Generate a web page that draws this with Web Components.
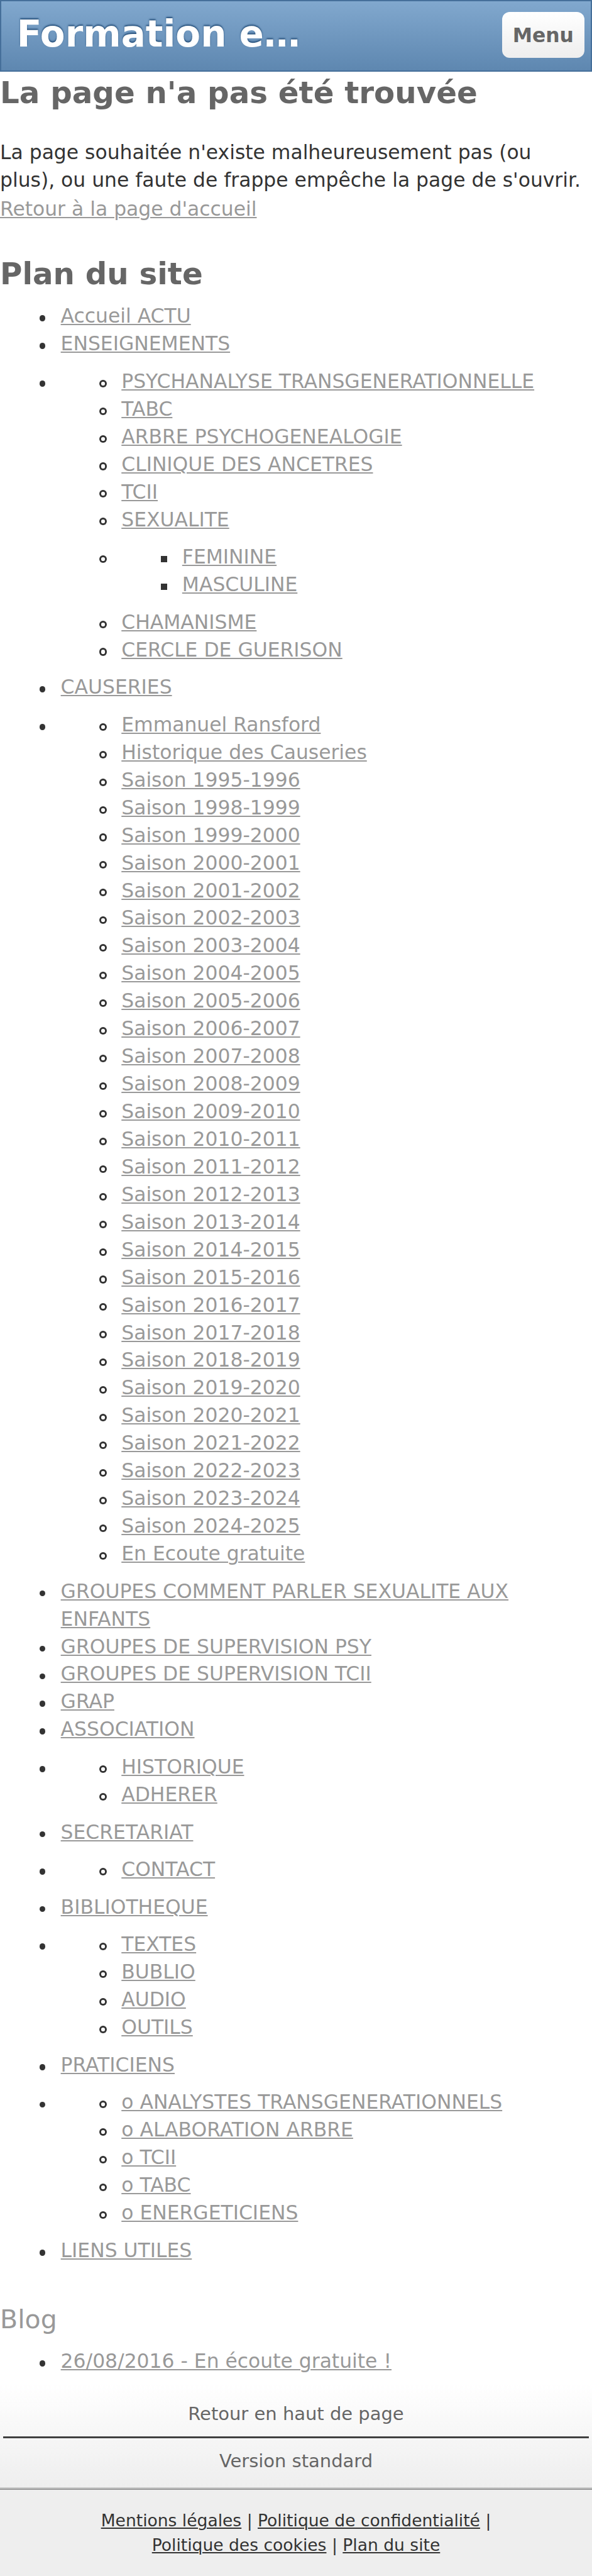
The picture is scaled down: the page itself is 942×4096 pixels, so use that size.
<!DOCTYPE html>
<html lang="fr">
<head>
<meta charset="utf-8">
<title>Plan du site</title>
<style>
    /* 1rem = 10px of a 390px wide mobile screen */
    html {
        font-size: calc(100vw / 39);
    }

    body {
        margin: 0;
        background: #fff;
        color: #333;
        font-family: "DejaVu Sans", Verdana, sans-serif;
    }
</style>
</head>
<body>
<mobile-page>
    <mobile-header slot="header">Formation e…<span slot="menu">Menu</span></mobile-header>
    <page-message>
        <span slot="title">La page n'a pas été trouvée</span>
        La page souhaitée n'existe malheureusement pas (ou plus), ou une faute de frappe empêche la page de s'ouvrir.
        <page-link slot="back">Retour à la page d'accueil</page-link>
    </page-message>
    <site-map></site-map>
    <mobile-footer slot="footer">
        <span slot="top">Retour en haut de page</span>
        <span slot="standard">Version standard</span>
    </mobile-footer>
</mobile-page>

<script>
const seasons = ['1995-1996', '1998-1999'];
for (let year = 1999; year < 2025; year++) {
    seasons.push(`${year}-${year + 1}`);
}

// A nested array is a sub list
const pages = [
    'Accueil ACTU',
    'ENSEIGNEMENTS',
    [
        'PSYCHANALYSE TRANSGENERATIONNELLE',
        'TABC',
        'ARBRE PSYCHOGENEALOGIE',
        'CLINIQUE DES ANCETRES',
        'TCII',
        'SEXUALITE',
        ['FEMININE', 'MASCULINE'],
        'CHAMANISME',
        'CERCLE DE GUERISON'
    ],
    'CAUSERIES',
    [
        'Emmanuel Ransford',
        'Historique des Causeries',
        ...seasons.map(season => `Saison ${season}`),
        'En Ecoute gratuite'
    ],
    'GROUPES COMMENT PARLER SEXUALITE AUX ENFANTS',
    'GROUPES DE SUPERVISION PSY',
    'GROUPES DE SUPERVISION TCII',
    'GRAP',
    'ASSOCIATION',
    ['HISTORIQUE', 'ADHERER'],
    'SECRETARIAT',
    ['CONTACT'],
    'BIBLIOTHEQUE',
    ['TEXTES', 'BUBLIO', 'AUDIO', 'OUTILS'],
    'PRATICIENS',
    [
        'o ANALYSTES TRANSGENERATIONNELS',
        'o ALABORATION ARBRE',
        'o TCII',
        'o TABC',
        'o ENERGETICIENS'
    ],
    'LIENS UTILES'
];

const posts = ['26/08/2016 - En écoute gratuite !'];

class MobilePage extends HTMLElement {
    constructor() {
        super();
        this.attachShadow({ mode: 'open' });
        this.shadowRoot.innerHTML = `
            <style>
                :host {
                    display: flex;
                    flex-direction: column;
                    min-height: 100vh;
                }

                main {
                    font-size: 1.3rem;
                    line-height: 1.819rem;
                }

                footer {
                    display: flex;
                    flex: 1;
                }
            </style>
            <slot name="header"></slot>
            <main><slot></slot></main>
            <footer><slot name="footer"></slot></footer>
        `;
    }
}

class MobileHeader extends HTMLElement {
    constructor() {
        super();
        this.attachShadow({ mode: 'open' });
        this.shadowRoot.innerHTML = `
            <style>
                :host {
                    display: flex;
                    justify-content: space-between;
                    align-items: flex-start;
                    box-sizing: border-box;
                    height: 4.7rem;
                    padding: 0.72rem 0.42rem 0 1.02rem;
                    border: 0.1rem solid #456f9a;
                    background: linear-gradient(#81a8ce, #5e87b0);
                }

                .name {
                    margin-top: 0.07rem;
                    color: #fff;
                    font-size: 2.4rem;
                    font-weight: bold;
                    line-height: 2.8rem;
                    text-shadow: 0 -0.1rem 0.1rem #254f7a;
                }

                button {
                    box-sizing: border-box;
                    height: 3rem;
                    margin: 0;
                    padding: 0 0.7rem;
                    border: 0;
                    border-radius: 0.5rem;
                    background: linear-gradient(#fff, #eee);
                    color: #666;
                    font: bold 1.3rem/2.9rem "DejaVu Sans", Verdana, sans-serif;
                }
            </style>
            <div class="name"><slot></slot></div>
            <button><slot name="menu"></slot></button>
        `;
    }
}

class PageLink extends HTMLElement {
    constructor() {
        super();
        this.attachShadow({ mode: 'open' });
        this.shadowRoot.innerHTML = `
            <style>
                :host {
                    display: inline;
                }

                a {
                    color: var(--link-color, #999);
                    text-decoration: underline;
                    text-decoration-thickness: 0.1rem;
                    text-underline-offset: 0.1rem;
                }
            </style>
            <a><slot></slot></a>
        `;
    }
}

class PageMessage extends HTMLElement {
    constructor() {
        super();
        this.attachShadow({ mode: 'open' });
        this.shadowRoot.innerHTML = `
            <style>
                :host {
                    display: block;
                }

                h1 {
                    margin: 0 0 1.64rem;
                    color: #666;
                    font-size: 2rem;
                    line-height: 2.8rem;
                }

                p {
                    margin: 0;
                }

                p + p {
                    margin-top: 0.08rem;
                }
            </style>
            <h1><slot name="title"></slot></h1>
            <p><slot></slot></p>
            <p><slot name="back"></slot></p>
        `;
    }
}

class SiteMap extends HTMLElement {
    constructor() {
        super();
        this.attachShadow({ mode: 'open' });
    }

    connectedCallback() {
        this.render();
    }

    renderList(items) {
        return `<ul>${items.map(item => `
            <li>${Array.isArray(item) ? this.renderList(item) : `<page-link>${item}</page-link>`}</li>
        `).join('')}</ul>`;
    }

    render() {
        this.shadowRoot.innerHTML = `
            <style>
                :host {
                    display: block;
                    padding-top: 1.97rem;
                }

                h1 {
                    margin: 0 0 0.48rem;
                    color: #666;
                    font-size: 2rem;
                    line-height: 2.8rem;
                }

                h2 {
                    margin: 2.46rem 0 0.65rem;
                    color: #999;
                    font-size: 1.7rem;
                    font-weight: normal;
                    line-height: 2.38rem;
                }

                ul {
                    margin: 0;
                    padding-left: 4rem;
                    list-style: none;
                }

                ul ul {
                    margin: 0.65rem 0;
                }

                /* Disc, then circle, then square */
                li::before {
                    content: "";
                    float: left;
                    width: 0.4rem;
                    height: 0.4rem;
                    margin: 0.83rem 1rem 0 -1.4rem;
                    border-radius: 50%;
                    background: #333;
                }

                ul ul > li::before {
                    width: 0.5rem;
                    height: 0.5rem;
                    margin: 0.78rem 0.95rem 0 -1.45rem;
                    background: none;
                    box-shadow: inset 0 0 0 0.12rem #333;
                }

                ul ul ul > li::before {
                    width: 0.4rem;
                    height: 0.4rem;
                    margin: 0.83rem 1rem 0 -1.4rem;
                    border-radius: 0;
                    background: #333;
                }
            </style>
            <h1>Plan du site</h1>
            ${this.renderList(pages)}
            <h2>Blog</h2>
            ${this.renderList(posts)}
        `;
    }
}

class MobileFooter extends HTMLElement {
    constructor() {
        super();
        this.attachShadow({ mode: 'open' });
        this.shadowRoot.innerHTML = `
            <style>
                :host {
                    display: flex;
                    flex: 1;
                    flex-direction: column;
                    padding-top: 0.54rem;
                    text-align: center;
                }

                .views {
                    box-sizing: border-box;
                    height: 6.9rem;
                    padding: 0 0.2rem;
                    border-bottom: 0.1rem solid #c8c8c8;
                    background: linear-gradient(#fff, #eee);
                    color: #666;
                    font-size: 1.2rem;
                }

                .views div {
                    box-sizing: border-box;
                    height: 3.6rem;
                    padding-top: 1.14rem;
                    line-height: 1.68rem;
                }

                .views div:first-child {
                    border-bottom: 0.13rem solid #404040;
                }

                .views div:last-child {
                    height: 3.2rem;
                    padding-top: 0.64rem;
                }

                .legal {
                    --link-color: #333;
                    flex: 1;
                    padding: 1.24rem 5rem 0;
                    border-top: 0.1rem solid #999;
                    background: #eee;
                    font-size: 1.1rem;
                    line-height: 1.6rem;
                }
            </style>
            <div class="views">
                <div><slot name="top"></slot></div>
                <div><slot name="standard"></slot></div>
            </div>
            <div class="legal">
                <page-link>Mentions légales</page-link> |
                <page-link>Politique de confidentialité</page-link> |
                <page-link>Politique des cookies</page-link> |
                <page-link>Plan du site</page-link>
            </div>
        `;
    }
}

customElements.define('page-link', PageLink);
customElements.define('mobile-header', MobileHeader);
customElements.define('page-message', PageMessage);
customElements.define('site-map', SiteMap);
customElements.define('mobile-footer', MobileFooter);
customElements.define('mobile-page', MobilePage);
</script>
</body>
</html>
